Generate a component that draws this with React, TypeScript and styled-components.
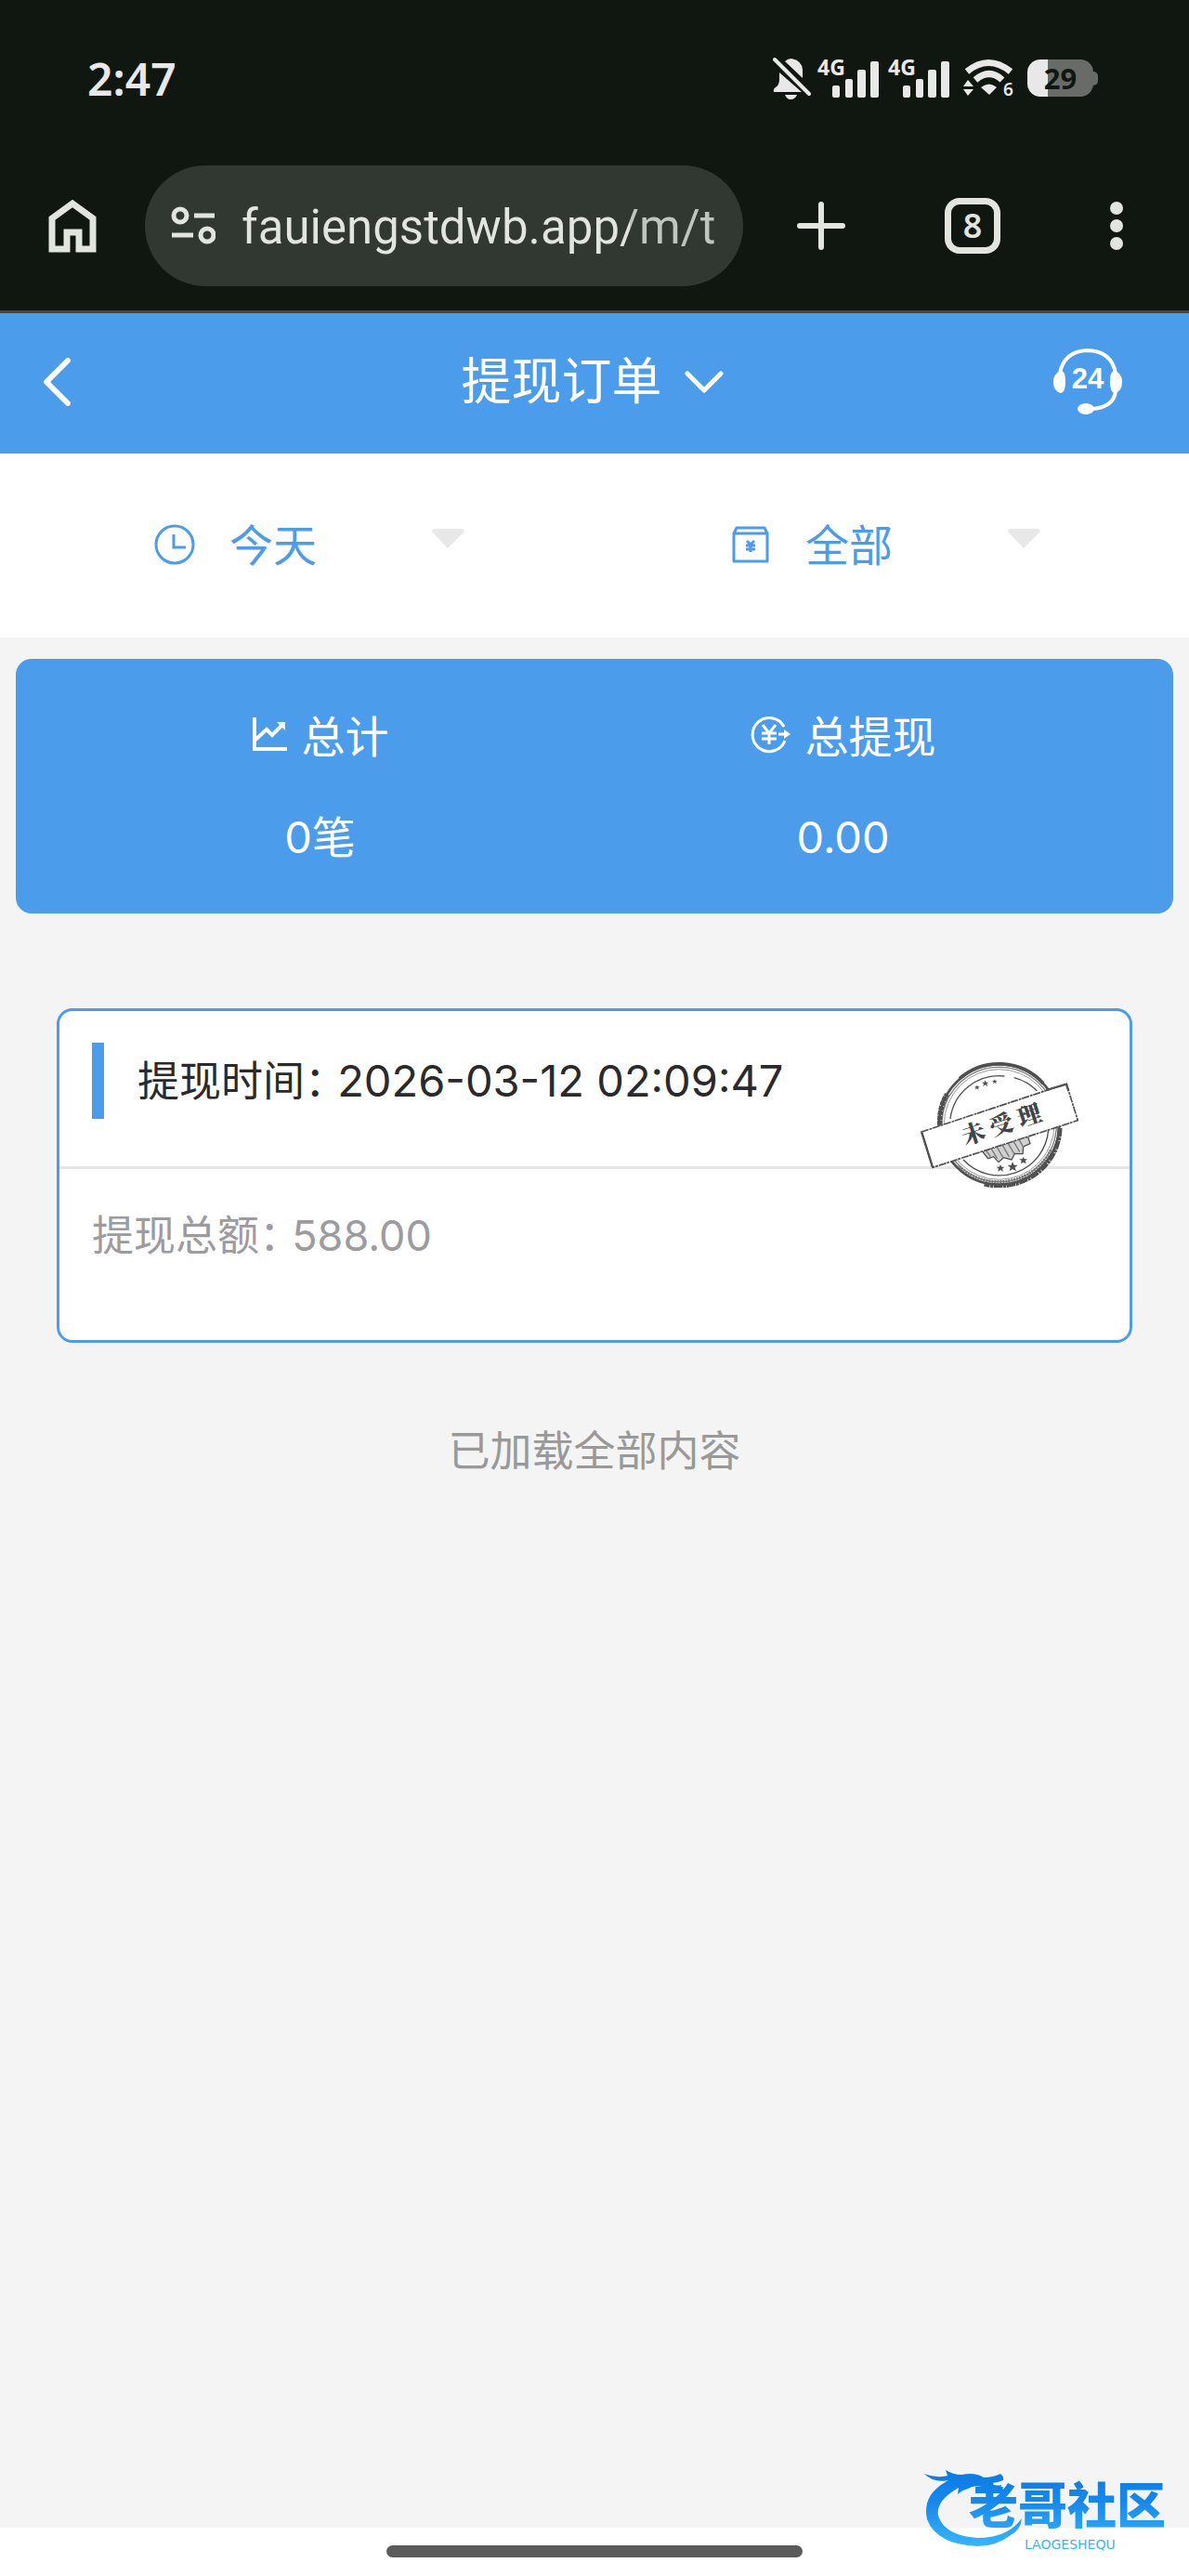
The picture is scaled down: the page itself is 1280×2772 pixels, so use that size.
import React from 'react';
import styled, { createGlobalStyle, css } from 'styled-components';

const GlobalStyle = createGlobalStyle`
  * { box-sizing: border-box; }
  body {
    margin: 0;
    background: #ffffff;
    font-family: Inter, "Noto Sans CJK SC", sans-serif;
    font-size: 45px;
    line-height: 66px;
  }
  button, input, select { font: inherit; color: inherit; }
`;

const plainControl = css`
  appearance: none;
  border: 0;
  padding: 0;
  margin: 0;
  background: none;
  outline: none;
  cursor: pointer;
`;

const Screen = styled.div`
  position: relative;
  display: flex;
  flex-direction: column;
  min-height: 100vh;
`;

const StatusBar = styled.div`
  display: flex;
  align-items: center;
  justify-content: space-between;
  height: 170px;
  padding: 0 98px 0 94px;
  background: #101610;
  color: #e8e8e8;
`;

const Clock = styled.time`
  font: 600 48px/64px "Noto Sans", sans-serif;
`;

const StatusIcons = styled.div`
  display: flex;
  align-items: center;
  gap: 7px;
  padding-bottom: 2px;
`;

const SignalBox = styled.div`
  display: flex;
  align-items: flex-start;
  height: 46px;
  width: 69px;
`;

const SignalLabel = styled.span`
  font: 700 23px/23px "Noto Sans", sans-serif;
  margin-right: -14px;
`;

const SignalBars = styled.svg`
  flex: none;
  align-self: flex-end;
`;

const WifiIcon = styled.svg`
  margin-left: 5px;
  overflow: visible;
`;

const Battery = styled.div`
  display: flex;
  align-items: center;
  margin-left: 7px;
`;

const BatteryBody = styled.div`
  width: 71px;
  height: 40px;
  border-radius: 14px;
  background: linear-gradient(to right, #e8e8e8 22px, #686b68 22px);
  color: #101610;
  font: 700 31px/40px "Noto Sans", sans-serif;
  text-align: center;
`;

const BatteryTip = styled.div`
  width: 5px;
  height: 15px;
  border-radius: 0 5px 5px 0;
  background: #686b68;
`;

const BrowserBar = styled.header`
  display: flex;
  align-items: center;
  height: 167px;
  padding: 0 60px 18px 52px;
  border-bottom: 3px solid #3f4a48;
  background: #101610;
  color: #e1e5dd;
`;

const IconButton = styled.button`
  ${plainControl}
  display: flex;
  flex: none;
  align-items: center;
  justify-content: center;
`;

const AddressPill = styled.div`
  display: flex;
  flex: 1;
  min-width: 0;
  align-items: center;
  gap: 28px;
  height: 130px;
  margin: 0 58px 0 52px;
  padding: 0 24px 0 28px;
  border-radius: 65px;
  background: #313731;
`;

const AddressInput = styled.input`
  ${plainControl}
  flex: 1;
  min-width: 0;
  height: 74px;
  padding-top: 2px;
  font: 400 51px/72px Roboto, sans-serif;
  cursor: text;
  color: transparent;
  background: linear-gradient(to right, #e1e5dd 81%, #bfc6be 81%);
  background-clip: text;
  -webkit-background-clip: text;
`;

const BrowserActions = styled.div`
  display: flex;
  align-items: center;
  gap: 107px;
`;

const TabsButton = styled(IconButton)`
  width: 60px;
  height: 60px;
  border: 7px solid #e1e5dd;
  border-radius: 16px;
  font: 600 36px/46px "Noto Sans", sans-serif;
`;

const MenuButton = styled(IconButton)`
  width: 36px;
`;

const TitleBar = styled.nav`
  display: grid;
  grid-template-columns: 1fr auto 1fr;
  align-items: center;
  height: 151px;
  padding: 0 71px 3px 46px;
  background: #4c9cec;
  color: #ffffff;
`;

const BackButton = styled(IconButton)`
  justify-self: start;
`;

const SupportButton = styled(IconButton)`
  justify-self: end;
`;

const TitleButton = styled(IconButton)`
  gap: 24px;
  padding-left: 20px;
  font-size: 54px;
  line-height: 80px;
`;

const Filters = styled.section`
  display: grid;
  grid-template-columns: 1fr 1fr;
  height: 198px;
  padding: 0 20px;
  background: #ffffff;
  color: #4c9cec;
`;

const Filter = styled.label`
  display: flex;
  align-items: center;
  padding: 0 140px 2px 146px;
`;

const FilterSelect = styled.select`
  ${plainControl}
  flex: 1;
  min-width: 0;
  height: 68px;
  margin-left: 37px;
  padding-top: 2px;
  font-size: 47px;
`;

const CaretIcon = styled.svg`
  flex: none;
  margin-bottom: 14px;
`;

const Content = styled.main`
  display: flex;
  flex: 1;
  flex-direction: column;
  padding: 23px 17px 0;
  background: #f4f4f4;
`;

const Totals = styled.dl`
  display: grid;
  grid-template-columns: 1fr 1fr;
  height: 274px;
  margin: 0;
  padding: 51px 74px 0 46px;
  border-radius: 17px;
  background: #4c9cec;
  color: #ffffff;
  font-size: 47px;
`;

const Total = styled.div`
  display: flex;
  flex-direction: column;
  align-items: center;
  gap: 42px;
`;

const TotalName = styled.dt`
  display: flex;
  align-items: center;
  gap: 16px;

  svg {
    margin-bottom: 6px;
  }
`;

const TotalValue = styled.dd`
  margin: 0;
`;

const OrderCard = styled.article`
  position: relative;
  margin: 102px 44px 0;
  border: 3px solid #4c9cec;
  border-radius: 17px;
  background: #ffffff;
`;

const OrderTime = styled.div`
  display: flex;
  align-items: center;
  gap: 36px;
  height: 170px;
  padding: 0 35px 18px;
  border-bottom: 3px solid #e6e6e6;
  color: #2a2a2a;
`;

const Accent = styled.span`
  width: 13px;
  height: 82px;
  background: #4c9cec;
`;

const Timestamp = styled.time`
  font-size: 47px;
`;

const OrderAmount = styled.div`
  height: 184px;
  padding: 36px 35px 0;
  color: #9c9ca0;
`;

const Colon = styled.span`
  font-family: "Noto Sans CJK SC", sans-serif;
  font-feature-settings: "halt";
`;

const Stamp = styled.svg`
  position: absolute;
  top: 54px;
  right: 55px;
`;

const EndNote = styled.p`
  margin: 84px 0 0;
  color: #999999;
  text-align: center;
`;

const GestureArea = styled.footer`
  display: flex;
  justify-content: center;
  height: 52px;
  padding-top: 19px;
  background: #ffffff;
`;

const GestureBar = styled.div`
  width: 35%;
  height: 13px;
  border-radius: 7px;
  background: #5b5b5b;
`;

const Watermark = styled.svg`
  position: absolute;
  right: 15px;
  bottom: 27px;
  overflow: visible;
`;

function Signal() {
  return (
    <SignalBox>
      <SignalLabel>4G</SignalLabel>
      <SignalBars width="50" height="42" viewBox="0 0 50 42" fill="currentColor">
        <rect x="0" y="27" width="8" height="13" rx="2" />
        <rect x="14" y="20" width="8" height="20" rx="2" />
        <rect x="27" y="10" width="9" height="30" rx="2" />
        <rect x="41" y="1" width="9" height="39" rx="2" />
      </SignalBars>
    </SignalBox>
  );
}

function Caret() {
  return (
    <CaretIcon width="35" height="21" viewBox="0 0 35 21">
      <path d="M4 0H31Q35 0 35 3L18 20Q17 21 16 20L0 3Q0 0 4 0Z" fill="#e8e8e8" />
    </CaretIcon>
  );
}

function OrderStamp() {
  return (
    <Stamp width="172" height="136" viewBox="88 94 516 408" role="img" aria-label="未受理" fill="none" stroke="#505050">
      <circle cx="348" cy="298" r="196" fill="#fff" stroke="none" />
      <circle cx="348" cy="298" r="194" strokeWidth="8" />
      <circle cx="348" cy="298" r="185" strokeWidth="4" stroke="#7c7c7c" />
      <circle cx="348" cy="298" r="178" strokeWidth="3" stroke="#9a9a9a" />
      <path d="M220 150A194 194 0 0 1 490 165" strokeWidth="11" />
      <path d="M156 300Q154 240 180 200" strokeWidth="16" strokeDasharray="14 2" />
      <path d="M544 310A196 190 0 0 1 300 490" strokeWidth="15" strokeDasharray="28 2 9 2" />
      <path d="M515 380A186 180 0 0 1 215 430" strokeWidth="9" stroke="#777" strokeDasharray="6 3" />
      <path d="M190 280A159 159 0 0 1 365 142M396 147A159 159 0 0 1 470 190M507 315A159 159 0 0 1 232 412" strokeWidth="4" />
      <g fill="#505050" stroke="none">
        <path d="M303 155l3 7 8 0-6 5 3 8-8-5-7 5 2-8-6-5 8 0z" />
        <path d="M277 171l2 5 6 0-5 4 2 6-6-4-5 4 2-6-5-4 6 0zM334 152l2 5 6 0-5 4 2 6-6-4-5 4 2-6-5-4 6 0z" />
        <path d="M391 418l5 11 12 0-9 8 4 12-12-7-10 7 3-12-9-8 12 0z" />
        <path d="M352 428l4 7 9 0-7 6 3 9-9-5-8 5 2-9-7-6 9 0zM426 403l4 7 9 0-7 6 3 9-9-5-8 5 2-9-7-6 9 0z" />
      </g>
      <path d="M294 385L312 408L330 402L346 420L362 405L388 412L398 392L424 393L426 370L448 360L440 335Z" fill="#d0d0d0" strokeWidth="4" />
      <path d="M306 382l14 20M322 376l20 32M340 370l20 34M358 364l22 38M376 358l20 34M394 352l20 34M412 346l14 26" strokeWidth="4" stroke="#777" />
      <path d="M97 322L565 167L602 285L133 437Z" fill="#fff" strokeWidth="5" strokeDasharray="24 3 9 2" />
      <path d="M98 324L133 436M500 187L565 168L572 190" strokeWidth="7" />
      <text
        x="356"
        y="325"
        transform="rotate(-18 356 300)"
        textAnchor="middle"
        fill="#444"
        stroke="none"
        fontFamily='"Noto Serif CJK SC", "Noto Sans CJK SC", serif'
        fontWeight="900"
        fontSize="76"
      >
        未 受 理
      </text>
    </Stamp>
  );
}

function CommunityLogo() {
  return (
    <Watermark width="272" height="96" viewBox="0 0 272 96" role="img" aria-label="老哥社区">
      <defs>
        <linearGradient id="logoBlue" gradientUnits="userSpaceOnUse" x1="0" y1="10" x2="0" y2="90">
          <stop offset="0" stopColor="#0a7be6" />
          <stop offset="0.4" stopColor="#1687ea" />
          <stop offset="1" stopColor="#35b5fb" />
        </linearGradient>
      </defs>
      <g fill="url(#logoBlue)">
        <path d="M2 13Q14 18 27 15L25 9Q33 14 42 14Q57 11 66 17Q76 17 84 13Q88 16 87 20Q78 24 70 22Q78 27 85 25L84 29Q74 32 64 27Q55 25 49 29Q42 31 38 35L39 28Q14 42 17 58Q24 80 59 82Q92 82 107 61Q106 73 95 79Q80 91 59 91Q15 89 5 62Q-1 35 28 20Q12 23 2 13Z" />
        <text x="50" y="67" fontFamily='"Noto Sans CJK SC", sans-serif' fontWeight="900" fontSize="53">
          老哥社区
        </text>
        <text x="110" y="94" fontFamily='"DejaVu Sans", sans-serif' fontSize="14">
          LAOGESHEQU
        </text>
      </g>
    </Watermark>
  );
}

export default function App() {
  return (
    <Screen>
      <GlobalStyle />
      <StatusBar>
        <Clock>2:47</Clock>
        <StatusIcons>
          <svg width="41" height="46" viewBox="0 0 41 46" fill="currentColor">
            <path d="M7 17L31 38H1Q0 35 3 33Q7 30 7 25Z" />
            <path d="M13 5Q16 2 20 2Q31 4 32 14V23Z" />
            <path d="M13 41H26Q24 46 19 46Q15 46 13 41Z" />
            <path d="M2 3L39 40" stroke="currentColor" strokeWidth="4" strokeLinecap="round" />
          </svg>
          <Signal />
          <Signal />
          <WifiIcon width="55" height="40" viewBox="0 0 55 40" fill="none">
            <path d="M4 13Q27-6 51 13" stroke="currentColor" strokeWidth="7" />
            <path d="M13 22Q28 9 42 22" stroke="currentColor" strokeWidth="7" />
            <path d="M19 30Q28 23 36 30L28 38Z" fill="currentColor" />
            <path d="M0 29L5 22L11 29ZM0 32H11L5 39Z" fill="currentColor" />
            <text x="43" y="39" fill="currentColor" fontFamily="Noto Sans" fontWeight="600" fontSize="19">6</text>
          </WifiIcon>
          <Battery>
            <BatteryBody>29</BatteryBody>
            <BatteryTip />
          </Battery>
        </StatusIcons>
      </StatusBar>

      <BrowserBar>
        <IconButton aria-label="主页">
          <svg width="52" height="58" viewBox="0 0 52 58" fill="none" stroke="currentColor" strokeWidth="7">
            <path d="M4 54V21L26 5L48 21V54H33V36H20V54Z" />
          </svg>
        </IconButton>
        <AddressPill>
          <svg width="48" height="42" viewBox="0 0 48 42" fill="none" stroke="currentColor" strokeWidth="5">
            <circle cx="10" cy="10" r="7" />
            <path d="M25 10H47M1 31H24" />
            <circle cx="39" cy="31" r="7" />
          </svg>
          <AddressInput aria-label="网址" defaultValue="fauiengstdwb.app/m/t" />
        </AddressPill>
        <BrowserActions>
          <IconButton aria-label="新标签页">
            <svg width="52" height="52" viewBox="0 0 52 52" stroke="currentColor" strokeWidth="6" strokeLinecap="round">
              <path d="M26 3V49M3 26H49" />
            </svg>
          </IconButton>
          <TabsButton aria-label="标签页">8</TabsButton>
          <MenuButton aria-label="菜单">
            <svg width="14" height="52" viewBox="0 0 14 52" fill="currentColor">
              <circle cx="7" cy="7" r="7" />
              <circle cx="7" cy="26" r="7" />
              <circle cx="7" cy="45" r="7" />
            </svg>
          </MenuButton>
        </BrowserActions>
      </BrowserBar>

      <TitleBar>
        <BackButton aria-label="返回">
          <svg width="31" height="52" viewBox="0 0 31 52" fill="none" stroke="currentColor" strokeWidth="6" strokeLinecap="round" strokeLinejoin="round">
            <path d="M27 3L4 26L27 49" />
          </svg>
        </BackButton>
        <TitleButton>
          提现订单
          <svg width="42" height="25" viewBox="0 0 42 25" fill="none" stroke="currentColor" strokeWidth="5" strokeLinecap="round" strokeLinejoin="round">
            <path d="M3 3L21 21L39 3" />
          </svg>
        </TitleButton>
        <SupportButton aria-label="客服">
          <svg width="76" height="72" viewBox="0 0 76 72" fill="currentColor">
            <path d="M8 27Q12 3 38 2Q64 3 68 27M68 46Q66 63 43 65" fill="none" stroke="currentColor" strokeWidth="4" />
            <path d="M10 24Q14 25 14 36Q14 47 9 48Q1 46 1 36Q1 26 10 24Z" />
            <path d="M66 24Q75 26 75 36Q75 46 67 48Q62 47 62 36Q62 25 66 24Z" />
            <ellipse cx="36" cy="65" rx="9" ry="6" />
            <text x="38" y="43" textAnchor="middle" fontFamily="Liberation Sans" fontWeight="700" fontSize="31">24</text>
          </svg>
        </SupportButton>
      </TitleBar>

      <Filters>
        <Filter>
          <svg width="44" height="44" viewBox="0 0 44 44" fill="none" stroke="currentColor" strokeWidth="3">
            <circle cx="22" cy="22" r="20" />
            <path d="M21 11V25H34" />
          </svg>
          <FilterSelect aria-label="日期" defaultValue="今天">
            <option>今天</option>
          </FilterSelect>
          <Caret />
        </Filter>
        <Filter>
          <svg width="44" height="44" viewBox="0 0 44 44" fill="none" stroke="currentColor" strokeWidth="3" strokeLinejoin="round">
            <path d="M7 4H37L40 10V40H4V10ZM4 10H40" />
            <path d="M18 18L22 22L26 18M22 22V30M17 23H27M17 27H27" />
          </svg>
          <FilterSelect aria-label="状态" defaultValue="全部">
            <option>全部</option>
          </FilterSelect>
          <Caret />
        </Filter>
      </Filters>

      <Content>
        <Totals>
          <Total>
            <TotalName>
              <svg width="38" height="38" viewBox="0 0 38 38" fill="none" stroke="currentColor" strokeWidth="4">
                <path d="M3 1V35H38M4 25L16 14L22 20L33 9" />
                <path d="M27 6H36V15Z" fill="currentColor" stroke="none" />
              </svg>
              总计
            </TotalName>
            <TotalValue>0笔</TotalValue>
          </Total>
          <Total>
            <TotalName>
              <svg width="43" height="42" viewBox="0 0 43 42" fill="none" stroke="currentColor" strokeWidth="3">
                <path d="M36 13A18 18 0 1 0 37 28" />
                <path d="M13 11L20 20L27 11M20 20V32M12 20H28M12 26H28M30 21H38" />
                <path d="M36 16L43 21L36 26Z" fill="currentColor" stroke="none" />
              </svg>
              总提现
            </TotalName>
            <TotalValue>0.00</TotalValue>
          </Total>
        </Totals>

        <OrderCard>
          <OrderTime>
            <Accent />
            <span>
              提现时间<Colon>：</Colon> <Timestamp>2026-03-12 02:09:47</Timestamp>
            </span>
          </OrderTime>
          <OrderAmount>
            提现总额<Colon>：</Colon> 588.00
          </OrderAmount>
          <OrderStamp />
        </OrderCard>

        <EndNote>已加载全部内容</EndNote>
      </Content>

      <GestureArea>
        <GestureBar />
      </GestureArea>
      <CommunityLogo />
    </Screen>
  );
}
